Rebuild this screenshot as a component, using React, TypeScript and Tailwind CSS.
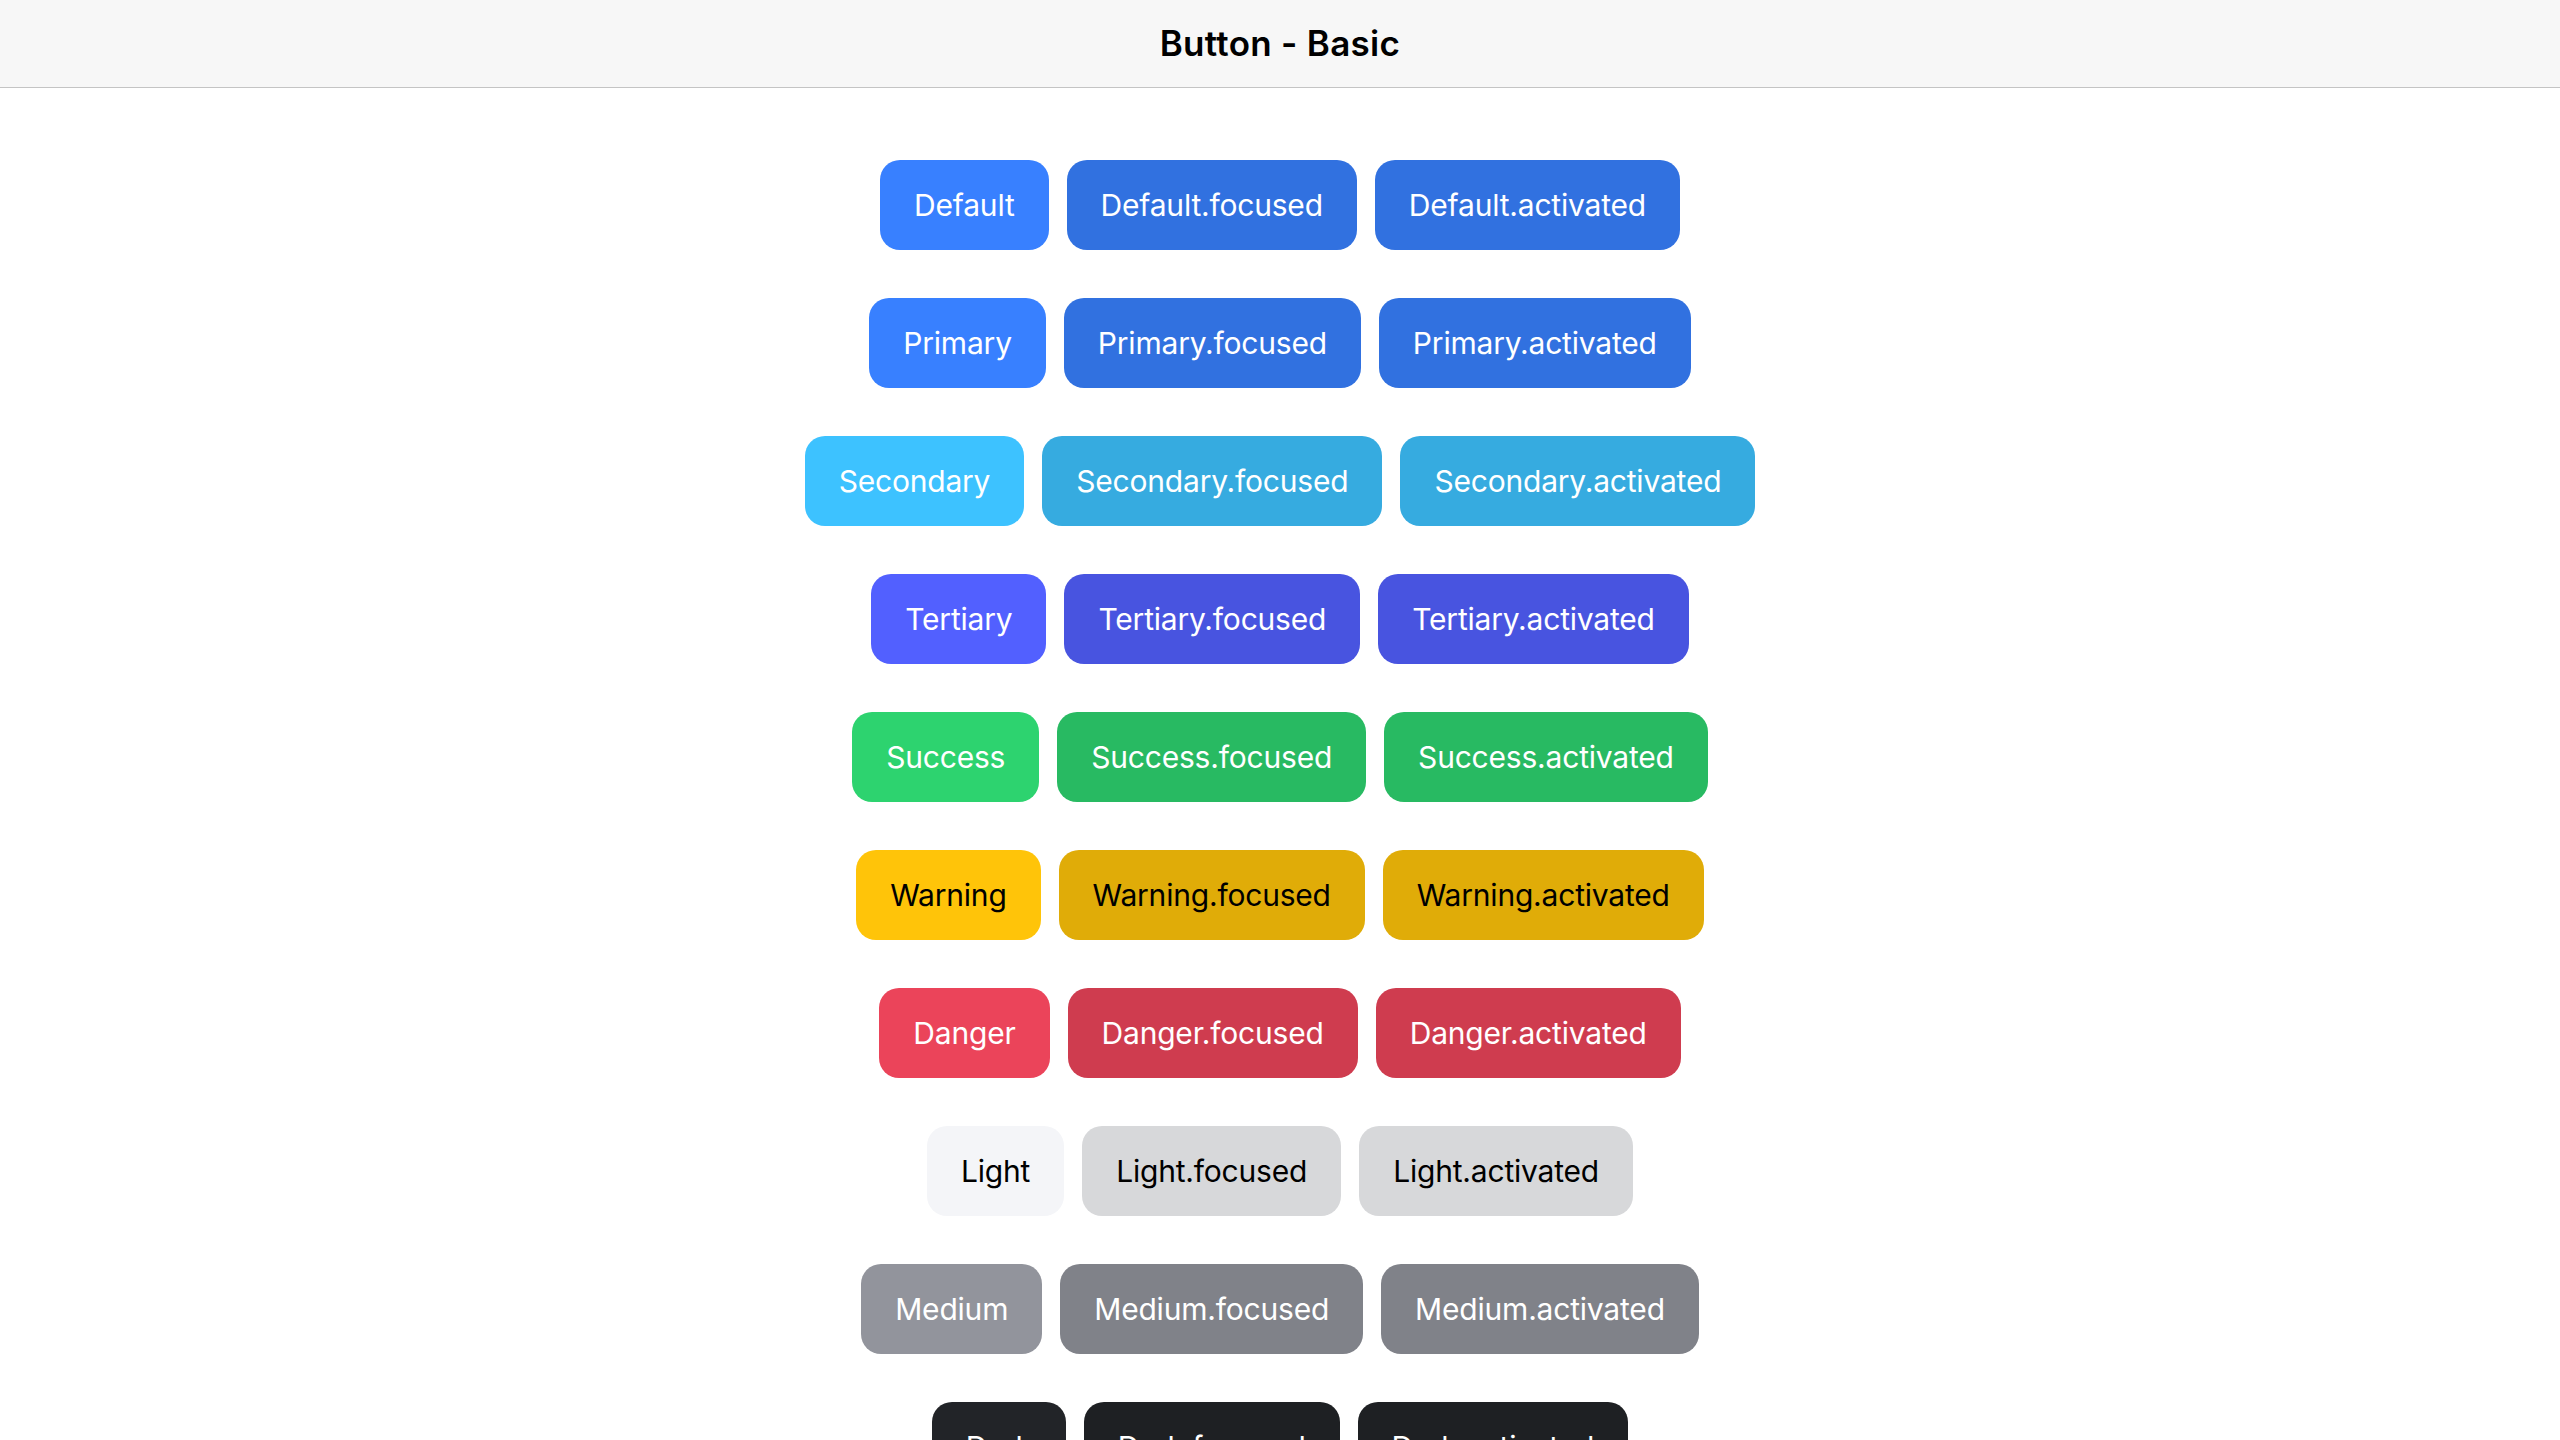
const rows = [
  { name: "Default", base: "bg-[#3880ff] text-white", shade: "bg-[#3171e0] text-white" },
  { name: "Primary", base: "bg-[#3880ff] text-white", shade: "bg-[#3171e0] text-white" },
  { name: "Secondary", base: "bg-[#3dc2ff] text-white", shade: "bg-[#36abe0] text-white" },
  { name: "Tertiary", base: "bg-[#5260ff] text-white", shade: "bg-[#4854e0] text-white" },
  { name: "Success", base: "bg-[#2dd36f] text-white", shade: "bg-[#28ba62] text-white" },
  { name: "Warning", base: "bg-[#ffc409] text-black", shade: "bg-[#e0ac08] text-black" },
  { name: "Danger", base: "bg-[#eb445a] text-white", shade: "bg-[#cf3c4f] text-white" },
  { name: "Light", base: "bg-[#f4f5f8] text-black", shade: "bg-[#d7d8da] text-black" },
  { name: "Medium", base: "bg-[#92949c] text-white", shade: "bg-[#808289] text-white" },
  { name: "Dark", base: "bg-[#222428] text-white", shade: "bg-[#1e2023] text-white" },
];

function Btn({ label, tone }: { label: string; tone: string }) {
  return (
    <button
      className={`h-[90px] px-[34px] rounded-[20px] text-[30px] tracking-[-0.2px] leading-none flex items-center justify-center whitespace-nowrap ${tone}`}
    >
      {label}
    </button>
  );
}

export default function App() {
  return (
    <div className="min-h-screen bg-white font-['Inter',sans-serif]">
      <header className="h-[88px] bg-[#f7f7f7] border-b border-[#c4c4c4] flex items-center justify-center">
        <h1 className="text-[35px] font-semibold text-black tracking-[0.3px]">Button - Basic</h1>
      </header>

      <main className="pt-[72px] flex flex-col gap-[48px]">
        {rows.map((row) => (
          <div key={row.name} className="flex justify-center gap-[18px]">
            <Btn label={row.name} tone={row.base} />
            <Btn label={`${row.name}.focused`} tone={row.shade} />
            <Btn label={`${row.name}.activated`} tone={row.shade} />
          </div>
        ))}
      </main>
    </div>
  );
}
